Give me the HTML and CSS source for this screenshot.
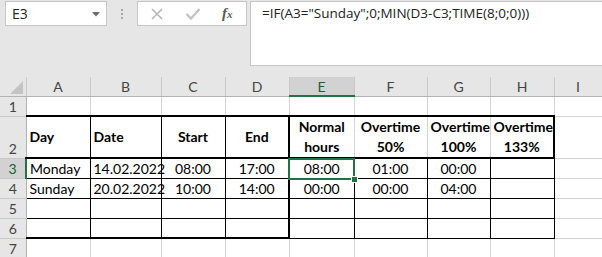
FILE: index.html
```html
<!DOCTYPE html>
<html>
<head>
<meta charset="utf-8">
<link rel="stylesheet" href="styles.css">
</head>
<body>
<div class="app">
  <div class="fbar">
    <div class="namebox">
      <span class="nb-text">E3</span>
      <svg class="nb-arrow" width="8" height="5" viewBox="0 0 8 5"><path d="M0 0H8L4 4.5Z" fill="#6b6b6b"/></svg>
    </div>
    <div class="grip">
      <span></span><span></span><span></span>
    </div>
    <div class="btns">
      <svg class="ic-x" width="14" height="14" viewBox="0 0 14 14"><path d="M2 2L12 12M12 2L2 12" stroke="#b4b4b4" stroke-width="1.5" fill="none"/></svg>
      <svg class="ic-ok" width="16" height="14" viewBox="0 0 16 14"><path d="M1.5 7L6 11.5L14.5 2" stroke="#c4c4c4" stroke-width="2.4" fill="none"/></svg>
      <span class="fx"><i>f</i><span class="fx-x">x</span></span>
    </div>
    <div class="formula">=IF(A3="Sunday";0;MIN(D3-C3;TIME(8;0;0)))</div>
  </div>
  <table class="sheet">
    <colgroup>
      <col class="w-rh"><col class="w-a"><col class="w-b"><col class="w-c"><col class="w-d"><col class="w-e"><col class="w-f"><col class="w-g"><col class="w-h"><col class="w-i">
    </colgroup>
    <tr class="r-hdr">
      <th class="corner"><svg width="13" height="13" viewBox="0 0 13 13"><path d="M13 0V13H0Z" fill="#c3c3c3"/></svg></th>
      <th class="ch">A</th><th class="ch">B</th><th class="ch">C</th><th class="ch">D</th><th class="ch ch-sel">E</th><th class="ch">F</th><th class="ch">G</th><th class="ch">H</th><th class="ch">I</th>
    </tr>
    <tr class="r1">
      <th class="rh">1</th>
      <td></td><td></td><td></td><td></td><td></td><td></td><td></td><td></td><td></td>
    </tr>
    <tr class="r2">
      <th class="rh">2</th>
      <td class="hd k">Day</td>
      <td class="hd k">Date</td>
      <td class="hd k c">Start</td>
      <td class="hd k c dr">End</td>
      <td class="hd hg c">Normal<br>hours</td>
      <td class="hd hg c">Overtime<br>50%</td>
      <td class="hd hg c">Overtime<br>100%</td>
      <td class="hd hg c hr">Overtime<br>133%</td>
      <td></td>
    </tr>
    <tr class="rd">
      <th class="rh rh-sel">3</th>
      <td class="k">Monday</td>
      <td class="k r">14.02.2022</td>
      <td class="k c">08:00</td>
      <td class="k c dr">17:00</td>
      <td class="k c sel">08:00</td>
      <td class="k c">01:00</td>
      <td class="k c">00:00</td>
      <td class="k"></td>
      <td></td>
    </tr>
    <tr class="rd">
      <th class="rh">4</th>
      <td class="k">Sunday</td>
      <td class="k r">20.02.2022</td>
      <td class="k c">10:00</td>
      <td class="k c dr">14:00</td>
      <td class="k c">00:00</td>
      <td class="k c">00:00</td>
      <td class="k c">04:00</td>
      <td class="k"></td>
      <td></td>
    </tr>
    <tr class="rd">
      <th class="rh">5</th>
      <td class="k"></td><td class="k"></td><td class="k"></td><td class="k dr"></td><td class="k"></td><td class="k"></td><td class="k"></td><td class="k"></td><td></td>
    </tr>
    <tr class="rd">
      <th class="rh">6</th>
      <td class="k db"></td><td class="k db"></td><td class="k db"></td><td class="k dr db"></td><td class="k"></td><td class="k"></td><td class="k"></td><td class="k"></td><td></td>
    </tr>
    <tr class="r7">
      <th class="rh">7</th>
      <td></td><td></td><td></td><td></td><td></td><td></td><td></td><td></td><td></td>
    </tr>
  </table>
</div>
</body>
</html>
```

FILE: styles.css
```css
* { box-sizing: border-box; }
html, body { margin: 0; padding: 0; background: #ffffff; }
body { width: 602px; height: 257px; overflow: hidden; }

.app { width: 602px; }

/* formula bar */
.fbar {
  height: 77px;
  background: #e6e6e6;
  display: flex;
  align-items: flex-start;
  padding-top: 1px;
  font-family: "Open Sans", "Noto Sans", sans-serif;
}
.namebox {
  margin-left: 5px;
  width: 102px;
  height: 25px;
  background: #fff;
  border: 1px solid #c6c6c6;
  display: flex;
  align-items: center;
  justify-content: space-between;
  padding: 0 6px 0 6px;
}
.nb-text { font-size: 14px; color: #222; }
.nb-arrow { margin-top: 1px; }
.grip {
  width: 30px;
  height: 25px;
  display: flex;
  flex-direction: column;
  align-items: center;
  justify-content: center;
  gap: 2px;
}
.grip span { width: 2px; height: 2px; background: #a6a6a6; display: block; }
.btns {
  width: 110px;
  height: 25px;
  background: #fff;
  border: 1px solid #c6c6c6;
  display: flex;
  align-items: center;
  padding-left: 12px;
}
.ic-x { margin-right: 21px; }
.ic-ok { margin-right: 21px; }
.fx { font-family: "Liberation Serif", "DejaVu Serif", serif; color: #5a5a5a; font-size: 15px; font-weight: bold; }
.fx i { font-style: italic; }
.fx-x { font-style: italic; font-size: 11px; }
.formula {
  margin-left: 3px;
  flex: 1;
  height: 65px;
  background: #fff;
  border: 1px solid #c6c6c6;
  border-right: 0;
  padding: 2px 0 0 11px;
  font-size: 13.5px;
  color: #222;
  white-space: nowrap;
}

/* sheet */
.sheet {
  border-collapse: collapse;
  table-layout: fixed;
  width: 602px;
  font-family: "Lato", "Liberation Sans", sans-serif;
  font-size: 14px;
  color: #000;
}
.w-rh { width: 26px; }
.w-a { width: 64px; }
.w-b { width: 71px; }
.w-c { width: 64px; }
.w-d { width: 64px; }
.w-e { width: 65px; }
.w-f { width: 73px; }
.w-g { width: 63px; }
.w-h { width: 64px; }
.w-i { width: 48px; }

.sheet th {
  background: #e6e6e6;
  font-weight: normal;
  color: #444;
  padding: 0;
  font-size: 14px;
}
.r-hdr { height: 19px; }
.r-hdr th {
  border-left: 1px solid #c8c8c8;
  border-right: 1px solid #c8c8c8;
  border-bottom: 1px solid #b3b3b3;
  border-top: 0;
  text-align: center;
  vertical-align: middle;
}
.r-hdr th.corner { border-left: 0; text-align: right; vertical-align: bottom; padding: 0 3px 2px 0; line-height: 0; }
.ch-sel { background: #d2d2d2 !important; color: #1d5c37 !important; border-bottom: 2px solid #217346 !important; }

.rh {
  border-left: 0;
  border-right: 1px solid #b3b3b3;
  border-top: 1px solid #c8c8c8;
  border-bottom: 1px solid #c8c8c8;
  text-align: center;
  vertical-align: bottom;
  line-height: 18px;
}
.rh-sel { background: #d2d2d2 !important; color: #1d5c37 !important; border-right: 2px solid #217346 !important; }

.r1 { height: 20px; }
.r2 { height: 42px; }
.rd { height: 20px; }
.r7 { height: 20px; }

.sheet td {
  border: 1px solid #d4d4d4;
  padding: 0 3px;
  vertical-align: bottom;
  white-space: nowrap;
  overflow: visible;
  line-height: 18px;
}
.sheet td.k { border-color: #000; }
.sheet td.hd { font-weight: bold; vertical-align: middle; line-height: 20px; border-top: 2px solid #000; border-bottom: 2px solid #000; }
.sheet td.hg { border-left-color: #d4d4d4; border-right-color: #d4d4d4; }
.sheet td.hr { border-right: 2px solid #000; }
.sheet td.dr { border-right: 2px solid #000; }
.sheet td.db { border-bottom: 2px solid #000; }
.c { text-align: center; }
.r { text-align: right; }

.sel { position: relative; }
.sel::after {
  content: "";
  position: absolute;
  left: -2px; top: -1px; right: -1px; bottom: -2px;
  border: 2px solid #217346;
}
.sel::before {
  content: "";
  position: absolute;
  right: -3px; bottom: -4px;
  width: 5px; height: 5px;
  background: #217346;
  outline: 1px solid #fff;
  z-index: 2;
}
```
